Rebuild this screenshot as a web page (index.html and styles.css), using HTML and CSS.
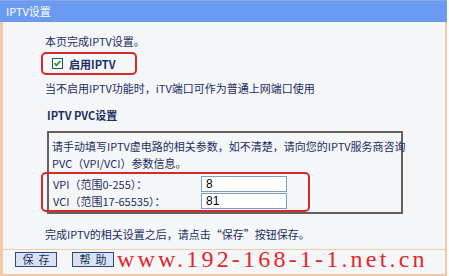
FILE: index.html
```html
<!DOCTYPE html>
<html>

	<head>
		<meta charset="UTF-8">
		<title>IPTV设置</title>
		<link rel="stylesheet" href="styles.css">
	</head>

	<body>
		<div class="panel">
			<div class="panel-title">IPTV设置</div>

			<div class="panel-body">
				<p class="line intro">本页完成IPTV设置。</p>

				<!-- 启用开关 -->
				<label class="mark enable">
					<span class="check">
						<svg width="11" height="11" viewBox="0 0 11 11">
							<rect x="0.5" y="0.5" width="10" height="10" fill="#ffffff" stroke="#1c5180"/>
							<path d="M2.5 5.2 L4.4 7.3 L8.4 3" fill="none" stroke="#21a121" stroke-width="1.8"/>
						</svg>
					</span>
					<b>启用IPTV</b>
				</label>

				<p class="line note">当不启用IPTV功能时，iTV端口可作为普通上网端口使用</p>

				<h3 class="sub">IPTV PVC设置</h3>

				<div class="pvc">
					<p>请手动填写IPTV虚电路的相关参数，如不清楚，请向您的IPTV服务商咨询</p>
					<p>PVC（VPI/VCI）参数信息。</p>
					<div class="mark fields">
						<div class="field">
							<span class="field-name">VPI（范围0-255）：</span>
							<input type="text" name="vpi" value="8" />
						</div>
						<div class="field">
							<span class="field-name">VCI（范围17-65535）：</span>
							<input type="text" name="vci" value="81" />
						</div>
					</div>
				</div>

				<p class="line done">完成IPTV的相关设置之后，请点击“保存”按钮保存。</p>
			</div>

			<div class="panel-foot">
				<button type="button" class="btn">保存</button>
				<button type="button" class="btn">帮助</button>
				<span class="watermark">www.192-168-1-1.net.cn</span>
			</div>
		</div>
	</body>

</html>
```

FILE: styles.css
```css
* {
	margin: 0;
	padding: 0;
	box-sizing: border-box;
}

body {
	background-color: #ffffff;
	font-family: "Noto Sans CJK SC", "DejaVu Sans", sans-serif;
	font-size: 11px;
	color: #1b2f62;
}

.panel {
	width: 447px;
}

.panel-title {
	height: 22px;
	line-height: 21px;
	padding-left: 6px;
	background-color: #6a9af2;
	border-top: 1px solid #8aa6dc;
	color: #ffffff;
}

.panel-body {
	padding: 11px 0 7px 42px;
	background-color: #f5f6f8;
	border-left: 3px solid #f2cba6;
	border-right: 2px solid #f2cba6;
}

.line {
	line-height: 16px;
}

.mark {
	border: 2px solid #d42a2a;
	border-radius: 5px;
}

.enable {
	display: flex;
	align-items: center;
	width: 96px;
	height: 23px;
	margin: 3px 0 0 -4px;
	padding-left: 9px;
}

.check {
	display: flex;
	margin-right: 6px;
}

.note {
	margin-top: 5px;
}

.sub {
	margin-top: 11px;
	font-size: 11px;
	line-height: 16px;
	padding-left: 2px;
}

.pvc {
	width: 356px;
	margin: 8px 0 0 2px;
	padding: 5px 0 0 3px;
	border: 2px solid #626262;
}

.pvc p {
	line-height: 17px;
	white-space: nowrap;
}

.fields {
	width: 269px;
	margin-left: -11px;
	padding: 2px 0 1px 10px;
	display: flex;
	flex-direction: column;
	gap: 1px;
}

.field {
	display: flex;
	align-items: center;
	height: 16px;
}

.field-name {
	width: 148px;
}

.field input {
	width: 86px;
	height: 16px;
	padding-left: 4px;
	border: 1px solid #7f9db9;
	background-color: #ffffff;
	font-family: "Liberation Sans", sans-serif;
	font-size: 12px;
	color: #000000;
	outline: none;
}

.done {
	margin-top: 12px;
}

.panel-foot {
	display: flex;
	align-items: flex-start;
	gap: 15px;
	height: 27px;
	padding: 2px 0 0 12px;
	background-color: #f5f6f8;
	border-top: 1px solid #f2cba6;
	border-left: 3px solid #f2cba6;
	border-right: 2px solid #f2cba6;
	border-bottom: 2px solid #f2cba6;
}

.btn {
	width: 42px;
	height: 15px;
	line-height: 13px;
	border: 1px solid #2b4a86;
	background-color: #dae2ef;
	font-family: "Noto Sans CJK SC", sans-serif;
	font-size: 11px;
	letter-spacing: 5px;
	text-indent: 5px;
	color: #18305f;
}

.watermark {
	margin: -5px 0 0 -12px;
	font-family: "Liberation Serif", serif;
	font-size: 24px;
	line-height: 24px;
	letter-spacing: 3.2px;
	color: #e3262b;
	white-space: nowrap;
}
```
